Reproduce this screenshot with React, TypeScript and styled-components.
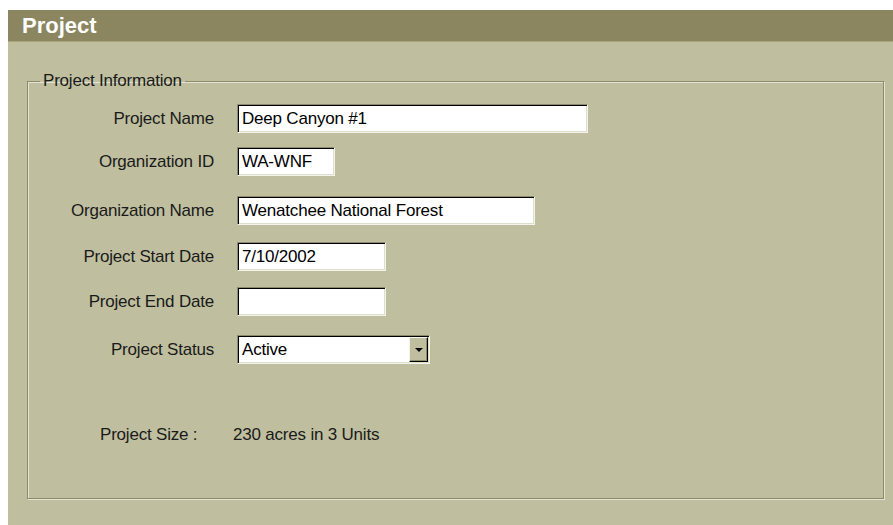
import styled, { createGlobalStyle } from "styled-components"

const colors = {
  header: "#8b8660",
  panel: "#bfbf9f",
  shadow: "#8e8a69",
  highlight: "#e4e4d6",
  text: "#1a1a1a",
}

const GlobalStyle = createGlobalStyle`
  html, body, #root {
    height: 100%;
  }
  body {
    margin: 0;
    background: #ffffff;
    font-family: "Liberation Sans", Arial, sans-serif;
  }
`

const Page = styled.div`
  height: 100%;
  box-sizing: border-box;
  padding: 10px 0 0 8px;
  display: flex;
  flex-direction: column;
`

const TitleBar = styled.div`
  height: 31px;
  background: ${colors.header};
  border-bottom: 1px solid #a9a67f;
  display: flex;
  align-items: center;
  padding-left: 14px;
  color: #ffffff;
  font-size: 22px;
  font-weight: bold;
`

const Panel = styled.div`
  flex: 1;
  background: ${colors.panel};
  display: flex;
  flex-direction: column;
  padding: 29px 9px 26px 19px;
`

const Group = styled.fieldset`
  flex: 1;
  margin: 0;
  padding: 0;
  border: 1px solid ${colors.shadow};
  box-shadow: inset 1px 1px 0 ${colors.highlight}, 1px 1px 0 ${colors.highlight};
  display: flex;
  flex-direction: column;
  font-size: 17px;
  letter-spacing: -0.2px;
  color: ${colors.text};
`

const Legend = styled.legend`
  margin-left: 12px;
  padding: 0 3px 0 3px;
  line-height: 20px;
`

const Row = styled.div<{ $top: number }>`
  display: grid;
  grid-template-columns: 186px auto;
  column-gap: 23px;
  align-items: center;
  margin-top: ${(p) => p.$top}px;
`

const Label = styled.label`
  text-align: right;
`

const Field = styled.div<{ $width: number }>`
  width: ${(p) => p.$width}px;
  height: 29px;
  box-sizing: border-box;
  background: #ffffff;
  border: 1px solid;
  border-color: ${colors.shadow} #f4f4ec #f4f4ec ${colors.shadow};
  box-shadow: inset 1px 1px 0 #000000, inset -1px -1px 0 #dedecc;
  display: flex;
  align-items: center;
  padding-left: 4px;
  color: #000000;
  white-space: nowrap;
`

const DropButton = styled.div`
  margin-left: auto;
  width: 19px;
  height: 25px;
  margin-right: 1px;
  box-sizing: border-box;
  background: ${colors.panel};
  border: 1px solid;
  border-color: #f4f4ec #000000 #000000 #f4f4ec;
  box-shadow: inset -1px -1px 0 ${colors.shadow};
  display: flex;
  align-items: center;
  justify-content: center;
`

const SizeRow = styled.div`
  display: flex;
  margin: 61px 0 0 72px;
`

const SizeLabel = styled.span`
  width: 133px;
`

const fields = [
  { label: "Project Name", value: "Deep Canyon #1", width: 351, top: 13 },
  { label: "Organization ID", value: "WA-WNF", width: 98, top: 14 },
  { label: "Organization Name", value: "Wenatchee National Forest", width: 298, top: 20 },
  { label: "Project Start Date", value: "7/10/2002", width: 149, top: 17 },
  { label: "Project End Date", value: "", width: 149, top: 16 },
]

export default function App() {
  return (
    <>
      <GlobalStyle />
      <Page>
        <TitleBar>Project</TitleBar>
        <Panel>
          <Group>
            <Legend>Project Information</Legend>
            {fields.map((f) => (
              <Row key={f.label} $top={f.top}>
                <Label>{f.label}</Label>
                <Field $width={f.width}>{f.value}</Field>
              </Row>
            ))}
            <Row $top={19}>
              <Label>Project Status</Label>
              <Field $width={193}>
                Active
                <DropButton>
                  <svg width="8" height="4" viewBox="0 0 8 4">
                    <path d="M0 0h8L4 4z" fill="#000" />
                  </svg>
                </DropButton>
              </Field>
            </Row>
            <SizeRow>
              <SizeLabel>Project Size :</SizeLabel>
              <span>230 acres in 3 Units</span>
            </SizeRow>
          </Group>
        </Panel>
      </Page>
    </>
  )
}
